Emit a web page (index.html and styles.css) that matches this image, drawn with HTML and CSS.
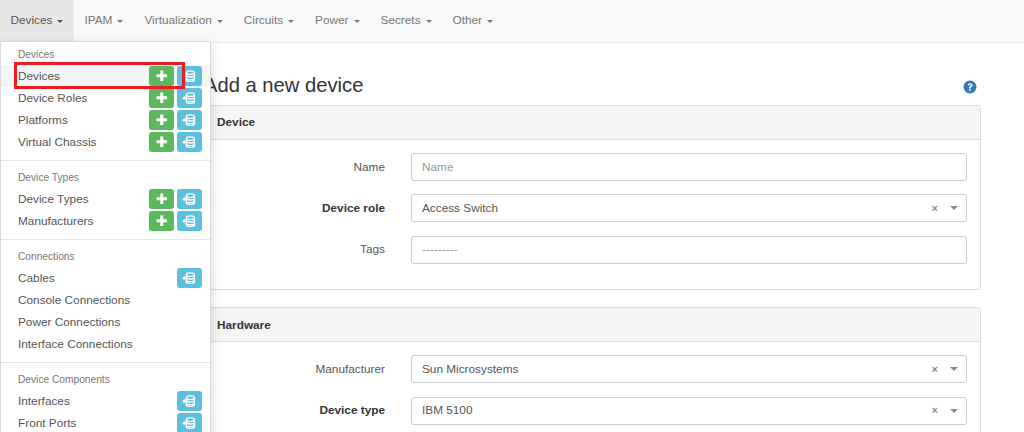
FILE: index.html
```html
<!DOCTYPE html>
<html lang="en">
<head>
<meta charset="utf-8">
<title>Add a new device</title>
<link rel="stylesheet" href="styles.css">
</head>
<body>
<svg class="defs" width="0" height="0" aria-hidden="true">
  <symbol id="plus" viewBox="0 0 12 12"><path d="M4.400 .5h3.200v3.900h3.900v3.200H7.600v3.900H4.400V7.600H.5V4.400h3.900z" fill="#fff"/></symbol>
  <symbol id="imp" viewBox="0 0 16 14">
    <g fill="none" stroke="#fff" stroke-width="1.600">
      <ellipse cx="9.600" cy="3" rx="4.600" ry="2"/>
      <path d="M5 3v8c0 1.100 2.100 2 4.600 2s4.600-.9 4.600-2V3"/>
      <path d="M6 7c.8.700 2 1 3.600 1s3.400-.4 4.600-1.100"/>
      <path d="M6 10.200c.8.700 2 1 3.600 1s3.400-.4 4.600-1.100"/>
    </g>
    <path d="M0 7l3.200-2.800v1.800h3.300v2H3.200v1.800z" fill="#fff"/>
  </symbol>
</svg>
<nav class="navbar">
  <a class="nav-item active">Devices <i class="caret"></i></a>
  <a class="nav-item">IPAM <i class="caret"></i></a>
  <a class="nav-item">Virtualization <i class="caret"></i></a>
  <a class="nav-item">Circuits <i class="caret"></i></a>
  <a class="nav-item">Power <i class="caret"></i></a>
  <a class="nav-item">Secrets <i class="caret"></i></a>
  <a class="nav-item">Other <i class="caret"></i></a>
</nav>

<div class="dropdown">
  <section class="group first">
    <div class="group-head">Devices</div>
    <div class="row hover"><span>Devices</span><span class="btns"><b class="btn green"><svg class="i-plus"><use href="#plus"/></svg></b><b class="btn blue"><svg class="i-imp"><use href="#imp"/></svg></b></span></div>
    <div class="row"><span>Device Roles</span><span class="btns"><b class="btn green"><svg class="i-plus"><use href="#plus"/></svg></b><b class="btn blue"><svg class="i-imp"><use href="#imp"/></svg></b></span></div>
    <div class="row"><span>Platforms</span><span class="btns"><b class="btn green"><svg class="i-plus"><use href="#plus"/></svg></b><b class="btn blue"><svg class="i-imp"><use href="#imp"/></svg></b></span></div>
    <div class="row"><span>Virtual Chassis</span><span class="btns"><b class="btn green"><svg class="i-plus"><use href="#plus"/></svg></b><b class="btn blue"><svg class="i-imp"><use href="#imp"/></svg></b></span></div>
  </section>
  <section class="group">
    <div class="group-head">Device Types</div>
    <div class="row"><span>Device Types</span><span class="btns"><b class="btn green"><svg class="i-plus"><use href="#plus"/></svg></b><b class="btn blue"><svg class="i-imp"><use href="#imp"/></svg></b></span></div>
    <div class="row"><span>Manufacturers</span><span class="btns"><b class="btn green"><svg class="i-plus"><use href="#plus"/></svg></b><b class="btn blue"><svg class="i-imp"><use href="#imp"/></svg></b></span></div>
  </section>
  <section class="group">
    <div class="group-head">Connections</div>
    <div class="row"><span>Cables</span><span class="btns"><b class="btn blue"><svg class="i-imp"><use href="#imp"/></svg></b></span></div>
    <div class="row"><span>Console Connections</span></div>
    <div class="row"><span>Power Connections</span></div>
    <div class="row"><span>Interface Connections</span></div>
  </section>
  <section class="group">
    <div class="group-head">Device Components</div>
    <div class="row"><span>Interfaces</span><span class="btns"><b class="btn blue"><svg class="i-imp"><use href="#imp"/></svg></b></span></div>
    <div class="row"><span>Front Ports</span><span class="btns"><b class="btn blue"><svg class="i-imp"><use href="#imp"/></svg></b></span></div>
  </section>
</div>
<div class="highlight"></div>

<main class="content">
  <header class="page-head">
    <h1>Add a new device</h1>
    <svg class="help" viewBox="0 0 14 14" aria-hidden="true"><circle cx="7" cy="7" r="6.500" fill="#337ab7"/><path d="M4.600 5.300C4.800 3.900 5.800 3.200 7.100 3.200c1.400 0 2.400.8 2.400 2 0 1-.6 1.500-1.200 1.900-.5.300-.7.500-.7 1v.3H6.100v-.5c0-.9.400-1.300 1-1.700.5-.3.800-.6.800-1 0-.4-.3-.7-.8-.7-.6 0-.9.300-1 .9z" fill="#fff"/><rect x="6.100" y="9.100" width="1.600" height="1.600" fill="#fff"/></svg>
  </header>

  <section class="panel">
    <div class="panel-head">Device</div>
    <div class="panel-body">
      <div class="field"><label>Name</label><div class="input placeholder">Name</div></div>
      <div class="field"><label class="req">Device role</label><div class="input select"><span>Access Switch</span><i class="clear">×</i><i class="arrow"></i></div></div>
      <div class="field"><label>Tags</label><div class="input placeholder">---------</div></div>
    </div>
  </section>

  <section class="panel">
    <div class="panel-head">Hardware</div>
    <div class="panel-body">
      <div class="field"><label>Manufacturer</label><div class="input select"><span>Sun Microsystems</span><i class="clear">×</i><i class="arrow"></i></div></div>
      <div class="field"><label class="req">Device type</label><div class="input select"><span>IBM 5100</span><i class="clear">×</i><i class="arrow"></i></div></div>
    </div>
  </section>
</main>
</body>
</html>
```
FILE: styles.css
```css
* { box-sizing: border-box; }
html, body { margin: 0; height: 432px; overflow: hidden; }
body { background: #fff; color: #333; font: 11.800px/17px "Liberation Sans", Arial, sans-serif; position: relative; }
.defs { position: absolute; }

.navbar { display: flex; height: 43px; background: #f8f8f8; border-bottom: 1px solid #e7e7e7; }
.nav-item { display: flex; align-items: center; gap: 5px; height: 42px; padding: 0 10.500px 1.500px; color: #777; }
.nav-item.active { background: #e7e7e7; color: #555; }
.caret { width: 0; height: 0; margin-top: 1.500px; border-top: 3.500px solid currentColor; border-left: 3.500px solid transparent; border-right: 3.500px solid transparent; }

.dropdown { position: absolute; left: 0; top: 41px; width: 211px; background: #fff; border: 1px solid #d9d9d9; box-shadow: 0 5px 11px rgba(0,0,0,.175); z-index: 2; }
.group { padding: 9px 0 7px; border-top: 1px solid #e5e5e5; }
.group.first { padding-top: 5px; border-top: 0; }
.group-head { height: 17px; margin-bottom: 1px; padding-left: 17px; font-size: 10.200px; line-height: 15px; color: #777; }
.row { display: flex; align-items: center; justify-content: space-between; height: 22px; padding: 0 8px 0 17px; color: #555; }
.row.hover { background: #f5f5f5; }
.btns { display: flex; gap: 2.500px; }
.btn { display: flex; align-items: center; justify-content: center; width: 25.500px; height: 20px; border-radius: 3px; }
.green { background: #5cb85c; }
.blue { background: #5bc0de; }
.i-plus { width: 11.500px; height: 11.500px; }
.i-imp { width: 14px; height: 12.300px; margin-right: 1px; }
.highlight { position: absolute; left: 14px; top: 62px; width: 171px; height: 27px; border: 3px solid #ed1c24; z-index: 3; }

.content { width: 776px; margin-left: 205px; }
.page-head { display: flex; align-items: center; justify-content: space-between; height: 62px; padding: 22px 4px 0 0; }
h1 { margin: 0 0 0 -1px; font-size: 20.200px; font-weight: 400; line-height: 26px; color: #333; }
.help { width: 14px; height: 14px; margin-top: 4px; }

.panel { border: 1px solid #ddd; border-radius: 3px; margin-bottom: 17.200px; }
.panel-head { height: 34px; padding: .8px 11px 0; display: flex; align-items: center; background: #f5f5f5; border-bottom: 1px solid #ddd; font-weight: 700; }
.panel-body { padding: 13px 13px 25.500px 0; display: flex; flex-direction: column; gap: 13.300px; }
.field { display: flex; align-items: center; color: #555; }
.field label { width: 179px; text-align: right; margin-right: 26px; }
.field label.req { font-weight: 700; color: #333; }
.input { flex: 1; display: flex; align-items: center; height: 28px; padding: 0 8px 0 10px; border: 1px solid #ccc; border-radius: 3px; color: #555; }
.placeholder { color: #999; }
.select span { flex: 1; }
.clear { font-style: normal; font-weight: 700; color: #888; margin-right: 12px; font-size: 11px; }
.arrow { width: 0; height: 0; border-top: 4px solid #888; border-left: 4px solid transparent; border-right: 4px solid transparent; }
```
